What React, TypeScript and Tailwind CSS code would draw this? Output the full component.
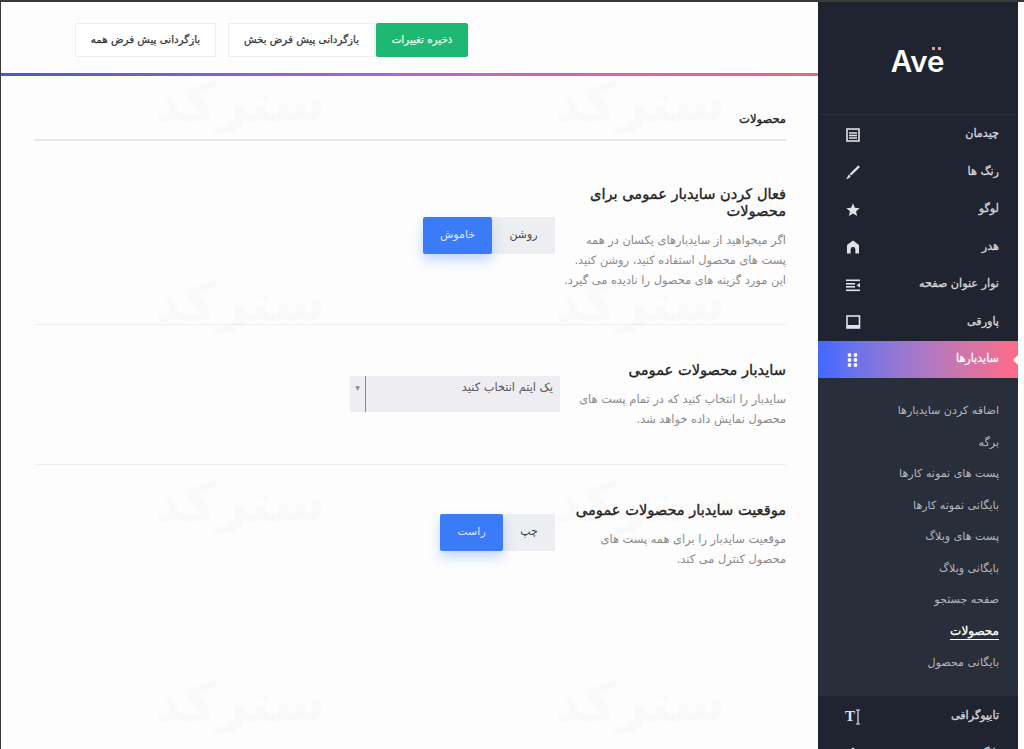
import { MdStar } from "react-icons/md";

const topItems = [
  { label: "چیدمان", icon: <LayoutIcon /> },
  { label: "رنگ ها", icon: <BrushIcon /> },
  { label: "لوگو", icon: <MdStar className="w-[18px] h-[18px]" /> },
  { label: "هدر", icon: <HomeIcon /> },
  { label: "نوار عنوان صفحه", icon: <TitleBarIcon /> },
  { label: "پاورقی", icon: <FooterIcon /> },
];

const subItems = [
  "اضافه کردن سایدبارها",
  "برگه",
  "پست های نمونه کارها",
  "بایگانی نمونه کارها",
  "پست های وبلاگ",
  "بایگانی وبلاگ",
  "صفحه جستجو",
  "محصولات",
  "بایگانی محصول",
];

function LayoutIcon() {
  return (
    <svg width="16" height="16" viewBox="0 0 16 16" fill="none" stroke="currentColor">
      <rect x="2" y="2" width="12" height="12" strokeWidth="1.6" />
      <path d="M4 6h8M4 8.5h8M4 11h8" strokeWidth="1.3" />
    </svg>
  );
}

function BrushIcon() {
  return (
    <svg width="16" height="16" viewBox="0 0 16 16" fill="currentColor">
      <path d="M13.2 1.4 15 3 6.2 11.6 4.6 10Z" />
      <path d="M4 10.6 5.6 12.2C4.6 14 3 14.8 1 15 2.6 13.8 2.6 11.6 4 10.6Z" />
    </svg>
  );
}

function HomeIcon() {
  return (
    <svg width="16" height="16" viewBox="0 0 16 16" fill="currentColor">
      <path d="M8 1.5 14 6v8.5h-3.6V10.5a2.4 2.4 0 0 0-4.8 0v4H2V6Z" />
    </svg>
  );
}

function TitleBarIcon() {
  return (
    <svg width="16" height="16" viewBox="0 0 16 16" fill="currentColor">
      <rect x="1" y="2.5" width="14" height="1.6" />
      <rect x="1" y="6" width="9" height="1.6" />
      <rect x="1" y="9" width="9" height="1.6" />
      <rect x="1" y="12.5" width="14" height="1.6" />
      <path d="M15 6 11.5 8.2 15 10.5Z" />
    </svg>
  );
}

function FooterIcon() {
  return (
    <svg width="16" height="16" viewBox="0 0 16 16" fill="none" stroke="currentColor">
      <rect x="2" y="2" width="12.5" height="12" strokeWidth="1.6" />
      <rect x="2" y="11" width="12.5" height="3" fill="currentColor" strokeWidth="0" />
    </svg>
  );
}

function DotsIcon() {
  return (
    <svg width="14" height="16" viewBox="0 0 14 16" fill="currentColor">
      {[3, 8, 13].map((y) =>
        [3.5, 9.5].map((x) => <circle key={`${x}-${y}`} cx={x} cy={y} r="1.9" />)
      )}
    </svg>
  );
}

function TypographyIcon() {
  return (
    <span className="flex items-center" dir="ltr">
      <span className="font-['Liberation_Serif',serif] font-bold text-[15px] leading-none">T</span>
      <svg width="6" height="16" viewBox="0 0 6 16" stroke="currentColor" fill="none" strokeWidth="1.2">
        <path d="M3 1v14M1 1h4M1 15h4" />
      </svg>
    </span>
  );
}

function Toggle({ on, off, onW, offW }: { on: string; off: string; onW: string; offW: string }) {
  return (
    <div className="flex h-[37px] text-[11px]">
      <div className={`${onW} h-[37px] bg-[#eceef1] text-[#444] flex items-center justify-center`}>{on}</div>
      <div
        className={`${offW} h-[37px] bg-[#3b7bf8] text-[#dfe9ff] rounded-[2px] flex items-center justify-center shadow-[0_6px_12px_rgba(59,123,248,0.3)]`}
      >
        {off}
      </div>
    </div>
  );
}

function Row({
  title,
  lines,
  children,
  className,
}: {
  title: string[];
  lines: string[];
  children: React.ReactNode;
  className: string;
}) {
  return (
    <div className={`flex ${className}`}>
      <div className="w-[230px] shrink-0">
        <h3 className="text-[14.6px] leading-[17px] font-normal [-webkit-text-stroke:0.35px] text-[#222]">
          {title.map((t) => (
            <div key={t}>{t}</div>
          ))}
        </h3>
        <div className="mt-[11px] text-[11.4px] leading-[20px] text-[#8a8a8a]">
          {lines.map((l) => (
            <div key={l}>{l}</div>
          ))}
        </div>
      </div>
      {children}
    </div>
  );
}

export default function App() {
  return (
    <div
      dir="rtl"
      className="relative w-[1024px] h-[749px] overflow-hidden flex bg-[#fdfdfd] font-['DejaVu_Sans',sans-serif] border-t-2 border-[#3a3a3a]"
    >
      <div className="w-[6px] shrink-0 bg-white" />

      {/* sidebar */}
      <aside className="w-[200px] h-[747px] shrink-0 overflow-hidden bg-[#1f2430] text-[#d5d7dc] flex flex-col relative">
        <div className="h-[113px] shrink-0 mx-[2px] border-b border-[#2d323e] flex justify-center pt-[45px]">
          <div className="relative h-[29px] ml-[-1px]" dir="ltr">
            <span className="font-['Inter',sans-serif] font-semibold text-[29.5px] leading-[29px] text-white">Ave</span>
            <span className="absolute right-[3px] top-[0px] w-[3px] h-[3px] bg-[#e8a090]" />
            <span className="absolute right-[9px] top-[0px] w-[3px] h-[3px] bg-[#e8a090]" />
          </div>
        </div>

        <nav className="pt-[1px] shrink-0">
          {topItems.map((item) => (
            <div key={item.label} className="h-[37.5px] flex items-center justify-between pr-[19px] pl-[27px]">
              <span className="text-[11.2px] [-webkit-text-stroke:0.3px]">{item.label}</span>
              <span className="w-[16px] flex justify-center text-[#e0e2e6]">{item.icon}</span>
            </div>
          ))}
        </nav>

        <div className="h-[37px] shrink-0 flex items-center justify-between pr-[19px] pl-[27px] bg-gradient-to-l from-[#ff6a85] to-[#4069ff] text-white relative">
          <span className="text-[11.2px] [-webkit-text-stroke:0.3px]">سایدبارها</span>
          <span className="w-[16px] flex justify-center">
            <DotsIcon />
          </span>
          <span className="absolute right-0 top-[14px] border-y-[5px] border-y-transparent border-r-[5px] border-r-white" />
        </div>

        <div className="h-[318px] shrink-0 bg-[#292e3b] pt-[18px] pr-[19px] text-[11.1px] text-[#b4b7bf]">
          {subItems.map((s) => (
            <div key={s} className="h-[31.5px] flex items-center">
              <span className={s === "محصولات" ? "text-white text-[12px] [-webkit-text-stroke:0.3px] border-b border-white leading-[15px]" : ""}>{s}</span>
            </div>
          ))}
        </div>

        <div className="h-[37.5px] shrink-0 mt-[2px] flex items-center justify-between pr-[19px] pl-[27px]">
          <span className="text-[11.2px] [-webkit-text-stroke:0.3px]">تایپوگرافی</span>
          <span className="w-[16px] flex justify-center text-[#e0e2e6]">
            <TypographyIcon />
          </span>
        </div>
        <div className="h-[37.5px] shrink-0 flex items-center justify-between pr-[19px] pl-[27px]">
          <span className="text-[11.2px] [-webkit-text-stroke:0.3px]">بلاگ</span>
          <span className="w-[16px] flex justify-center text-[#e0e2e6]">
            <HomeIcon />
          </span>
        </div>
      </aside>

      {/* main */}
      <main className="relative flex-1 h-[747px] border-l border-[#3a3a3a]">
        <div className="absolute inset-0 grid grid-cols-[300px_300px] grid-rows-[repeat(4,200px)] gap-x-[100px] pointer-events-none text-[54px] font-bold text-black/[0.015] pr-[28px]">
          {Array.from({ length: 8 }).map((_, i) => (
            <div key={i} className="flex items-center justify-center">
              سترکد
            </div>
          ))}
        </div>

        <header className="relative h-[71px] flex items-start pt-[21px] pr-[350px] text-[10.3px] [-webkit-text-stroke:0.25px]">
          <button className="w-[92px] h-[34px] bg-[#1fb873] text-[#e4fff2] rounded-[2px]">ذخیره تغییرات</button>
          <button className="w-[147px] h-[34px] mr-[1px] bg-white text-[#333] border border-[#eee]">بازگردانی پیش فرض بخش</button>
          <button className="w-[141px] h-[34px] mr-[12px] bg-white text-[#333] border border-[#eee]">بازگردانی پیش فرض همه</button>
        </header>
        <div className="relative h-[3px] bg-gradient-to-l from-[#f4647c] via-[#b066cc] to-[#4658d8]" />

        <section className="relative pr-[32px] pl-[33px]">
          <h2 className="pt-[34px] h-[65px] text-[11.5px] [-webkit-text-stroke:0.35px] leading-[18px] text-[#222] border-b-2 border-[#e9e9e9]">محصولات</h2>

          <Row
            className="h-[184px] pt-[44px] border-b border-[#eeeeee]"
            title={["فعال کردن سایدبار عمومی برای", "محصولات"]}
            lines={["اگر میخواهید از سایدبارهای یکسان در همه", "پست های محصول استفاده کنید، روشن کنید.", "این مورد گزینه های محصول را نادیده می گیرد."]}
          >
            <div className="mt-[32px] mr-[1px]">
              <Toggle on="روشن" off="خاموش" onW="w-[63px]" offW="w-[69px]" />
            </div>
          </Row>

          <Row
            className="h-[140px] pt-[36px] border-b border-[#eeeeee]"
            title={["سایدبار محصولات عمومی"]}
            lines={["سایدبار را انتخاب کنید که در تمام پست های", "محصول نمایش داده خواهد شد."]}
          >
            <div className="w-[210px] h-[36px] mt-[15px] mr-[-4px] flex bg-[#eeeef2] text-[11.4px] text-[#555]">
              <div className="flex-1 pr-[7px] pt-[3px]">یک ایتم انتخاب کنید</div>
              <div className="w-[16px] border-r border-[#888] text-[6px] text-[#888] flex justify-center pt-[7px]">▼</div>
            </div>
          </Row>

          <Row
            className="h-[140px] pt-[36px]"
            title={["موقعیت سایدبار محصولات عمومی"]}
            lines={["موقعیت سایدبار را برای همه پست های", "محصول کنترل می کند."]}
          >
            <div className="mt-[13px] mr-[1px]">
              <Toggle on="چپ" off="راست" onW="w-[52px]" offW="w-[63px]" />
            </div>
          </Row>
        </section>
      </main>
    </div>
  );
}
